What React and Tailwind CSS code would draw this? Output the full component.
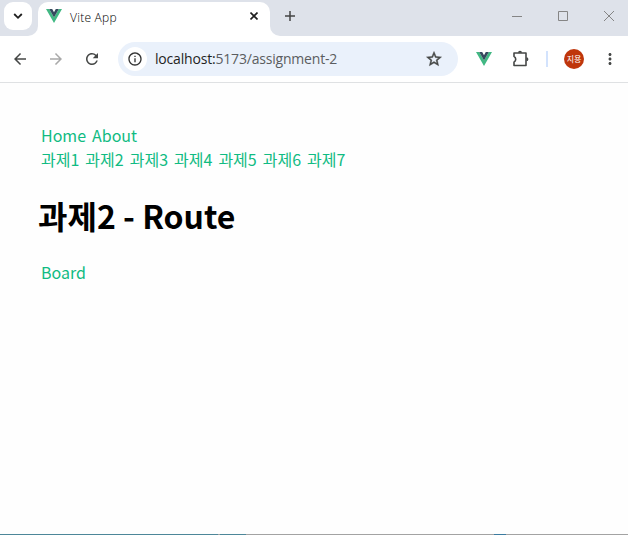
import React from 'react';
import { MdArrowBack, MdArrowForward, MdRefresh, MdInfoOutline, MdStarOutline, MdMoreVert } from 'react-icons/md';

const tasks = [1, 2, 3, 4, 5, 6, 7];

function VueLogo({ className }) {
  return (
    <svg className={className} viewBox="0 0 16 14" preserveAspectRatio="none">
      <path d="M0 0h3.2L8 8.4 12.8 0H16L8 14z" fill="#41b883" />
      <path d="M3.2 0h3L8 3.2 9.8 0h3L8 8.4z" fill="#35495e" />
    </svg>
  );
}

function TabStrip() {
  return (
    <header className="flex h-9 shrink-0 bg-[#dee2ea]">
      <div className="flex h-9 w-[38px] bg-white">
        <div className="h-9 w-[38px] rounded-br-[10px] bg-[#dee2ea] pl-1 pt-0.5">
          <button className="flex h-7 w-7 items-center justify-center rounded-[9px] bg-white">
            <svg width="10" height="8" viewBox="0 0 10 8" fill="none" stroke="#1f1f1f" strokeWidth="1.8">
              <path d="M1.2 2 5 5.8 8.8 2" />
            </svg>
          </button>
        </div>
      </div>
      <div className="bg-[#dee2ea] pt-0.5">
        <div className="flex h-[34px] w-[232px] rounded-t-[10px] bg-white pl-2">
          <VueLogo className="mt-[7px] h-[14px] w-4" />
          <span className="ml-2 mt-[7px] flex-1 whitespace-nowrap font-['Open_Sans',sans-serif] text-[12px] font-light leading-[18px] tracking-[0.25px] text-black">
            Vite App
          </span>
          <svg className="mr-3 mt-[10px]" width="8" height="8" viewBox="0 0 8 8" stroke="#1f1f1f" strokeWidth="1.6">
            <path d="M.5.5l7 7M7.5.5l-7 7" />
          </svg>
        </div>
      </div>
      <div className="flex-1 bg-white">
        <div className="flex h-9 rounded-bl-[10px] bg-[#dee2ea] pl-[15px] pr-[14px]">
          <svg className="mt-[11px]" width="10" height="10" viewBox="0 0 10 10" stroke="#444" strokeWidth="1.5">
            <path d="M5 0v10M0 5h10" />
          </svg>
          <div className="mt-[11px] flex flex-1 justify-end gap-9">
            <svg width="10" height="10" stroke="#858585"><path d="M0 5.5h10" /></svg>
            <svg width="10" height="10" fill="none" stroke="#858585"><path d="M.5.5h9v9h-9z" /></svg>
            <svg width="10" height="10" stroke="#858585"><path d="M0 0l10 10M10 0L0 10" /></svg>
          </div>
        </div>
      </div>
    </header>
  );
}

function Toolbar() {
  return (
    <div className="flex h-[47px] shrink-0 items-center border-b border-[#dfe1e3] pl-[11px] text-[#454746]">
      <MdArrowBack className="h-[18px] w-[18px] shrink-0" />
      <MdArrowForward className="ml-[18px] h-[18px] w-[18px] shrink-0 text-[#a9a9a9]" />
      <MdRefresh className="ml-[18px] h-[18px] w-[18px] shrink-0" />
      <div className="ml-[17px] flex h-[34px] w-[340px] shrink-0 items-center rounded-full bg-[#eaf1fb] pl-[5px] pr-[15px]">
        <div className="flex h-6 w-6 items-center justify-center rounded-full bg-white">
          <MdInfoOutline className="h-4 w-4 text-[#333]" />
        </div>
        <span className="ml-2 flex-1 whitespace-nowrap font-['Open_Sans',sans-serif] text-[14px] leading-5 tracking-[-0.19px] text-[#5b5d60]">
          <span className="text-[#1f1f1f]">localhost:</span>5173/assignment-2
        </span>
        <MdStarOutline className="h-[18px] w-[18px] stroke-current stroke-[0.6]" />
      </div>
      <VueLogo className="ml-[18px] h-[14px] w-4 shrink-0" />
      <svg className="ml-5 shrink-0" width="18" height="18" viewBox="0 0 18 18" fill="none">
        <path d="M2 3h12v12.5H2v-3.4c2.3-1.6 2.3-4.1 0-5.7z" stroke="#454746" strokeWidth="1.6" strokeLinejoin="round" />
        <path d="M6 2.8a2 2 0 0 1 4 0zM14.4 7.2a2 2 0 0 1 0 4z" fill="#454746" />
      </svg>
      <div className="ml-4 h-4 w-0.5 shrink-0 bg-[#d3e3fd]" />
      <div className="ml-4 flex h-5 w-5 shrink-0 items-center justify-center whitespace-nowrap rounded-full bg-[#bf360c] font-['Noto_Sans_CJK_KR',sans-serif] text-[8px] leading-none text-white">
        지용
      </div>
      <MdMoreVert className="ml-[17px] h-[18px] w-[18px] shrink-0" />
    </div>
  );
}

export default function App() {
  return (
    <div className="flex h-[535px] w-[628px] flex-col overflow-hidden bg-white font-['Noto_Sans_CJK_KR',sans-serif]">
      <TabStrip />
      <Toolbar />
      <main className="flex-1 bg-[#fefefe] pl-[38px] pt-10 text-[#10bb82]">
        <nav className="text-[16px] leading-6">
          <div className="flex">
            <a className="px-[3px]">Home</a>
            <a className="px-[3px]">About</a>
          </div>
          <div className="flex">
            {tasks.map((n) => (
              <a key={n} className="px-[3px]">과제{n}</a>
            ))}
          </div>
        </nav>
        <h1 className="mt-5 text-[32px] font-bold leading-[48px] text-black">과제2 - Route</h1>
        <a className="mt-[21px] block px-[3px] text-[16px] leading-6">Board</a>
      </main>
      <footer className="flex h-px bg-[#a3a3a3]">
        <div className="h-px w-[218px] bg-[#4d8799]" />
        <div className="h-px w-0.5 bg-[#a3a3a3]" />
        <div className="h-px w-[26px] bg-[#4d8799]" />
        <div className="ml-[248px] h-px w-3 bg-[#3b7ba0]" />
      </footer>
    </div>
  );
}
